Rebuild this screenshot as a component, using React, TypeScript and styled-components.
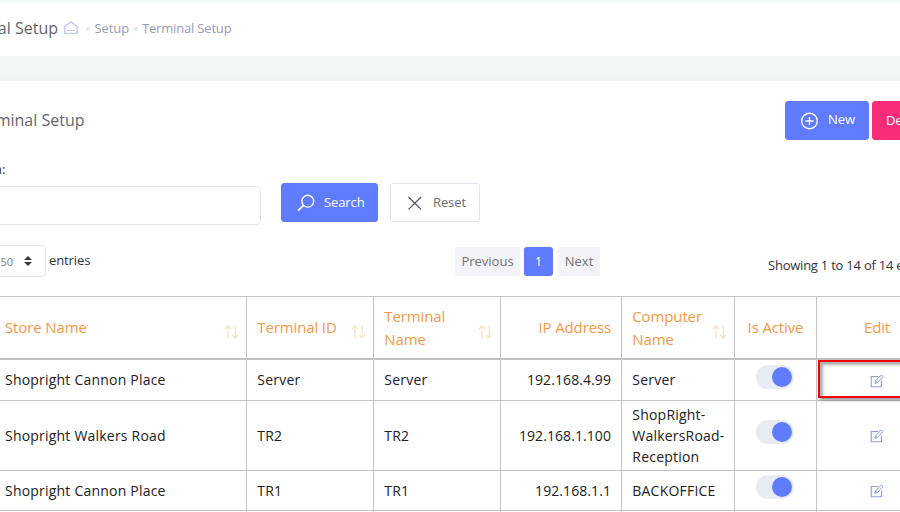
import React from "react";
import styled, { createGlobalStyle } from "styled-components";

const GlobalStyle = createGlobalStyle`
  * { box-sizing: border-box; }
  body { margin: 0; overflow: hidden; background: #fff; font-family: "Open Sans", sans-serif; }
`;

const Page = styled.div`
  width: 900px;
  height: 512px;
  overflow: hidden;
  background: #fff;
  color: #30333c;
  font-size: 13px;
  white-space: nowrap;
`;

const SubHeader = styled.header`
  display: flex;
  align-items: center;
  height: 56px;
  padding-bottom: 2px;
  border-top: 2px solid #f2f7f8;
`;

/* The page is scrolled sideways, so left-hand content is clipped at the edge. */
const Clipped = styled.div<{ $w: number }>`
  display: flex;
  justify-content: flex-end;
  flex: none;
  width: ${(p) => p.$w}px;
  overflow: hidden;
`;

const Heading = styled.h1`
  margin: 0;
  font-size: 16px;
  line-height: 24px;
  font-weight: 400;
  color: #646469;
`;

const Crumbs = styled.nav`
  display: flex;
  align-items: center;
  margin-left: 6px;
  color: #959cb6;
  line-height: 20px;

  svg { margin-right: 8px; }
`;

const Dot = styled.i`
  width: 4px;
  height: 4px;
  border-radius: 50%;
  background: #e5e5ef;
  margin: 2px 4.5px 0 0;
`;

const Crumb = styled.span<{ $w: number; $ls?: number }>`
  width: ${(p) => p.$w}px;
  letter-spacing: ${(p) => p.$ls ?? 0}px;
`;

const Band = styled.div`
  height: 25px;
  background: linear-gradient(#f2f8f8 50%, #eff4f5);
`;

const Portlet = styled.main`
  background: #fff;
`;

const PortletHead = styled.div`
  display: flex;
  justify-content: space-between;
  align-items: flex-start;
  height: 79px;
  padding-top: 20px;
`;

const TitleSlot = styled.div`
  display: flex;
  align-items: center;
  height: 38px;
`;

const Actions = styled.div`
  display: flex;
  gap: 3px;
  width: 115px;
`;

const Button = styled.button<{ $tone: "primary" | "danger" | "plain"; $w: number }>`
  display: flex;
  align-items: center;
  flex: none;
  width: ${(p) => p.$w}px;
  height: 39px;
  padding: 0 0 0 ${(p) => (p.$tone === "danger" ? 13 : 14.5)}px;
  border: 1px solid
    ${(p) => (p.$tone === "primary" ? "#5f7bff" : p.$tone === "danger" ? "#f92c7b" : "#e2e5ec")};
  border-radius: 3px;
  background: ${(p) => (p.$tone === "primary" ? "#5f7bff" : p.$tone === "danger" ? "#f92c7b" : "#fff")};
  color: ${(p) => (p.$tone === "plain" ? "#6a6d73" : "#fff")};
  font: 400 13px/20px "Open Sans", sans-serif;

  svg { flex: none; margin-right: 9.5px; }
`;

const ButtonText = styled.span<{ $strong?: boolean; $lift?: number }>`
  margin-bottom: ${(p) => p.$lift ?? 1}px;
  font-weight: ${(p) => (p.$strong ? 500 : 400)};
  letter-spacing: -0.1px;
`;

const Label = styled.label`
  line-height: 18px;
`;

const SearchRow = styled.div`
  display: flex;
  align-items: flex-start;
  height: 62px;
  padding-top: 5px;
`;

const Input = styled.input`
  width: 266px;
  height: 39px;
  margin: 3px 20px 0 -5px;
  border: 1px solid #e2e5ec;
  border-radius: 5px;
  background: #fff;
`;

const SearchButtons = styled.div`
  display: flex;
  gap: 12px;
`;

const ListBar = styled.div`
  display: flex;
  align-items: flex-start;
  height: 56px;
  padding-top: 5px;

  > * { flex: none; }
`;

const PageSize = styled.div`
  display: flex;
  justify-content: flex-end;
  align-items: center;
  width: 51px;
  height: 32px;
  margin-left: -5px;
  padding-right: 13px;
  border: 1px solid #e2e5ec;
  border-radius: 4px;
  color: #7c8088;
  font-size: 11px;

  svg { margin-left: 11px; }
`;

const Entries = styled.span`
  width: 409px;
  padding: 5px 0 0 3px;
  line-height: 20px;
  letter-spacing: -0.1px;
`;

const Pager = styled.div`
  display: flex;
  gap: 4px;
  padding-top: 2px;
`;

const PageButton = styled.span<{ $w: number; $on?: boolean }>`
  width: ${(p) => p.$w}px;
  height: 29px;
  margin-right: ${(p) => (p.$on ? 1 : 0)}px;
  border-radius: 3px;
  background: ${(p) => (p.$on ? "#5f7bff" : "#f2f2f7")};
  color: ${(p) => (p.$on ? "#fff" : "#707279")};
  line-height: 29px;
  text-align: center;
`;

const Info = styled.span`
  margin-left: 168px;
  padding-top: 10px;
  line-height: 20px;
  letter-spacing: -0.23px;
`;

const Row = styled.div<{ $h: number; $head?: boolean }>`
  display: grid;
  grid-template-columns: 247px 127px 127px 121px 113px 82px 121px;
  width: 938px;
  height: ${(p) => p.$h}px;
  border-bottom: ${(p) => (p.$head ? 2 : 1)}px solid #c3c3c3;
`;

const Table = styled.section`
  border-top: 1px solid #c3c3c3;
`;

const Cell = styled.div<{ $align?: "right" | "center"; $first?: boolean }>`
  display: flex;
  align-items: center;
  justify-content: ${(p) =>
    p.$align === "right" ? "flex-end" : p.$align === "center" ? "center" : "flex-start"};
  padding: 0 ${(p) => (p.$align === "right" ? 10 : 0)}px 1px
    ${(p) => (p.$align ? 0 : p.$first ? 5 : 10.3)}px;
  border-right: 1px solid #c3c3c3;
  font-size: 14px;
  line-height: 21px;
  letter-spacing: ${(p) => (p.$align === "right" ? 0.08 : 0.21)}px;
  white-space: pre-line;
  color: #212121;
`;

const HeadCell = styled(Cell)`
  justify-content: ${(p) =>
    p.$align === "right" ? "flex-end" : p.$align === "center" ? "center" : "space-between"};
  padding-bottom: 0;
  font-size: 15px;
  line-height: 23px;
  letter-spacing: -0.13px;
  color: #f2994a;

  svg { flex: none; margin: 9px 7px 0 0; }
`;

const ToggleTrack = styled.span`
  display: flex;
  justify-content: flex-end;
  width: 38px;
  height: 24px;
  margin: 0 1px 6px 0;
  padding: 2px;
  border-radius: 12px;
  background: #e8ebf1;
`;

const ToggleKnob = styled.span`
  width: 20px;
  height: 20px;
  border-radius: 50%;
  background: #5f7bff;
`;

const EditCell = styled(Cell)`
  position: relative;

  svg { margin-top: 2px; }
`;

const Highlight = styled.div`
  position: absolute;
  left: 1px;
  top: 0;
  width: 130px;
  height: 38px;
  border: 2px solid #f50000;
  box-shadow: 2px 2px 3px rgba(0, 0, 0, 0.45), inset 3px 3px 3px rgba(0, 0, 0, 0.32);
`;

const HomeIcon = () => (
  <svg width="14" height="14" viewBox="0 0 14 14" fill="none" stroke="#c6cae9">
    <path d="M.8 12.4V5.4L7 .9l6.2 4.5v7z" strokeWidth="1.4" />
    <path d="M3 9.5h8" />
  </svg>
);

const PlusIcon = () => (
  <svg width="18" height="18" viewBox="0 0 18 18" fill="none" stroke="#fff">
    <circle cx="8.5" cy="9" r="7.8" strokeWidth="1.4" />
    <path d="M4.5 9h8M8.5 5v8" strokeWidth="1.3" />
  </svg>
);

const SearchIcon = () => (
  <svg width="18" height="18" viewBox="0 0 18 18" fill="none" stroke="#fff" strokeWidth="1.4">
    <circle cx="10.8" cy="7.2" r="5.9" />
    <path d="M6.5 11.4L1 16.6" strokeWidth="1.8" />
  </svg>
);

const CloseIcon = () => (
  <svg width="18" height="18" viewBox="0 0 18 18" fill="none" stroke="#55585f" strokeWidth="1.3">
    <path d="M2.5 3l12.6 12.4M15.1 3L2.5 15.4" />
  </svg>
);

const CaretsIcon = () => (
  <svg width="8" height="10" viewBox="0 0 8 10" fill="#343a40">
    <path d="M0 4L4 0l4 4zM0 6h8l-4 4z" />
  </svg>
);

const SortIcon = () => (
  <svg width="15" height="14" viewBox="0 0 15 14" fill="none" stroke="#fce0c3" strokeWidth="1.2">
    <path d="M4 13.5V1M1.2 4L4 1l2.8 3M11.2.5V13M8.4 10l2.8 3 2.8-3" />
  </svg>
);

const EditIcon = () => (
  <svg width="14" height="14" viewBox="0 0 14 14" fill="none" stroke="#8f9bdc">
    <path d="M8 2.5H1.2v10.3h10.3V6.5" strokeWidth="1.1" />
    <path d="M5 9.4l.6-2.5L11.3.9l1.8 1.7-5.8 6zM5.6 6.9l1.7 1.7" strokeWidth="1" />
  </svg>
);

const columns: { text: string; align?: "right" | "center"; sort?: boolean }[] = [
  { text: "Store Name", sort: true },
  { text: "Terminal ID", sort: true },
  { text: "Terminal\nName", sort: true },
  { text: "IP Address", align: "right" },
  { text: "Computer\nName", sort: true },
  { text: "Is Active", align: "center" },
  { text: "Edit", align: "center" },
];

const terminals = [
  { store: "Shopright Cannon Place", id: "Server", ip: "192.168.4.99", computer: "Server", h: 41, marked: true },
  { store: "Shopright Walkers Road", id: "TR2", ip: "192.168.1.100", computer: "ShopRight-\nWalkersRoad-\nReception", h: 70 },
  { store: "Shopright Cannon Place", id: "TR1", ip: "192.168.1.1", computer: "BACKOFFICE", h: 40 },
  { store: "", id: "", ip: "", computer: "", h: 40 },
];

export default function App() {
  return (
    <Page>
      <GlobalStyle />
      <SubHeader>
        <Clipped $w={58}>
          <Heading>Terminal Setup</Heading>
        </Clipped>
        <Crumbs>
          <HomeIcon />
          <Dot />
          <Crumb $w={39} $ls={-0.1}>Setup</Crumb>
          <Dot />
          <Crumb $w={100} $ls={-0.18}>Terminal Setup</Crumb>
        </Crumbs>
      </SubHeader>
      <Band />
      <Portlet>
        <PortletHead>
          <TitleSlot>
            <Clipped $w={84.5}>
              <Heading as="h2">Terminal Setup</Heading>
            </Clipped>
          </TitleSlot>
          <Actions>
            <Button $tone="primary" $w={84}>
              <PlusIcon />
              <ButtonText $strong $lift={3}>New</ButtonText>
            </Button>
            <Button $tone="danger" $w={100}>
              <ButtonText>Delete</ButtonText>
            </Button>
          </Actions>
        </PortletHead>
        <Clipped $w={5.5}>
          <Label>Search:</Label>
        </Clipped>
        <SearchRow>
          <Input aria-label="Search" />
          <SearchButtons>
            <Button $tone="primary" $w={97}>
              <SearchIcon />
              <ButtonText $strong>Search</ButtonText>
            </Button>
            <Button $tone="plain" $w={90}>
              <CloseIcon />
              <ButtonText>Reset</ButtonText>
            </Button>
          </SearchButtons>
        </SearchRow>
        <ListBar>
          <PageSize>
            50
            <CaretsIcon />
          </PageSize>
          <Entries>entries</Entries>
          <Pager>
            <PageButton $w={65}>Previous</PageButton>
            <PageButton $w={29} $on>1</PageButton>
            <PageButton $w={42}>Next</PageButton>
          </Pager>
          <Info>Showing 1 to 14 of 14 entries</Info>
        </ListBar>
        <Table>
          <Row $h={63} $head>
            {columns.map((c, i) => (
              <HeadCell key={c.text} $align={c.align} $first={i === 0}>
                {c.text}
                {c.sort && <SortIcon />}
              </HeadCell>
            ))}
          </Row>
          {terminals.map((t, i) => (
            <Row key={i} $h={t.h}>
              <Cell $first>{t.store}</Cell>
              <Cell>{t.id}</Cell>
              <Cell>{t.id}</Cell>
              <Cell $align="right">{t.ip}</Cell>
              <Cell>{t.computer}</Cell>
              <Cell $align="center">
                {t.id && (
                  <ToggleTrack>
                    <ToggleKnob />
                  </ToggleTrack>
                )}
              </Cell>
              <EditCell $align="center">
                {t.id && <EditIcon />}
                {t.marked && <Highlight />}
              </EditCell>
            </Row>
          ))}
        </Table>
      </Portlet>
    </Page>
  );
}
